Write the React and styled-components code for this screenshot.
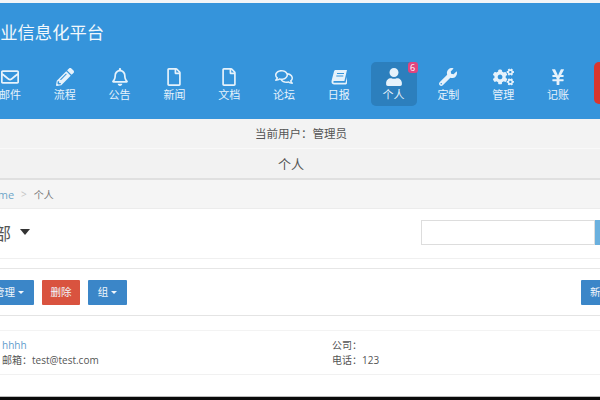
import React from "react";
import styled, { createGlobalStyle } from "styled-components";
import {
  FaRegEnvelope,
  FaPencilAlt,
  FaRegBell,
  FaRegFile,
  FaRegComments,
  FaUser,
  FaWrench,
  FaCogs,
  FaYenSign,
} from "react-icons/fa";

const GlobalStyle = createGlobalStyle`
  html, body {
    margin: 0;
    padding: 0;
    background: #fff;
    overflow: hidden;
  }
  * {
    box-sizing: border-box;
  }
`;

const Page = styled.div`
  width: 600px;
  height: 400px;
  overflow: hidden;
  display: flex;
  flex-direction: column;
  background: #fff;
  color: #555;
  font-family: "Open Sans", "Noto Sans CJK SC", sans-serif;
  font-size: 11px;
`;

const TopStrip = styled.div`
  height: 3px;
  background: #f2f5f7;
`;

const Header = styled.header`
  height: 116px;
  background: #3594db;
  color: #fff;
  overflow: hidden;
`;

const Brand = styled.h1`
  margin: 20px 0 0 -17px;
  height: 20px;
  font-size: 17.3px;
  line-height: 20px;
  font-weight: 400;
  color: #f2f8fc;
  white-space: nowrap;
`;

const Nav = styled.nav`
  display: flex;
  gap: 8.8px;
  margin: 19px 0 0 -13px;
  width: 700px;
`;

const NavItem = styled.a`
  position: relative;
  flex: 0 0 46px;
  height: 44px;
  display: flex;
  flex-direction: column;
  align-items: center;
  padding-top: 6px;
  border-radius: 5px;
  background: ${({ $active }) => ($active ? "#2c7fbd" : "transparent")};
  color: #e6f2fb;
  font-size: 11px;
  line-height: 14px;

  svg {
    height: 18px;
    width: ${({ $wide }) => ($wide ? "21px" : "18px")};
    margin-bottom: 2px;
  }
`;

const Badge = styled.span`
  position: absolute;
  top: 0;
  right: -1px;
  width: 10px;
  height: 11px;
  border-radius: 3px;
  background: #e0457f;
  color: #fff;
  font-size: 9px;
  line-height: 11px;
  text-align: center;
`;

const LogoutItem = styled.a`
  flex: 0 0 46px;
  height: 42px;
  margin-left: 4px;
  border-radius: 5px;
  background: #d9362e;
`;

const UserBar = styled.div`
  height: 30px;
  background: #f3f3f3;
  border-bottom: 1px solid #f9f9f9;
  display: flex;
  align-items: center;
  justify-content: center;
  padding: 0 0 2px 2px;
  font-size: 11.5px;
  color: #555;
`;

const TitleBar = styled.div`
  height: 31px;
  background: #f2f2f2;
  border-bottom: 2px solid #e0e0e0;
  display: flex;
  align-items: center;
  justify-content: center;
  padding-right: 18px;
  font-size: 13px;
  color: #555;
`;

const Breadcrumb = styled.div`
  height: 29px;
  background: #f5f5f5;
  border-bottom: 1px solid #ececec;
  display: flex;
  align-items: center;
  margin-left: -17px;
  width: 620px;
  gap: 7px;
  font-size: 10px;
  color: #777;
`;

const Crumb = styled.a`
  color: #6fa6c9;
  font-size: 11px;
`;

const Sep = styled.span`
  color: #c4c4c4;
`;

const TitleRow = styled.div`
  height: 50px;
  padding-bottom: 3px;
  border-bottom: 1px solid #f0f0f0;
  display: flex;
  align-items: center;
  justify-content: space-between;
`;

const Dept = styled.div`
  display: flex;
  align-items: center;
  gap: 9px;
  margin-left: -23px;
  font-size: 17px;
  color: #555;
`;

const Caret = styled.span`
  width: 0;
  height: 0;
  border-left: 5.5px solid transparent;
  border-right: 5.5px solid transparent;
  border-top: 6px solid #333;
`;

const Search = styled.div`
  display: flex;
  margin-right: -10px;
`;

const SearchInput = styled.input`
  width: 174px;
  height: 25px;
  border: 1px solid #ddd;
  background: #fff;
  outline: none;
`;

const SearchButton = styled.button`
  width: 15px;
  height: 25px;
  border: 0;
  background: #6ab0de;
`;

const Spacer = styled.div`
  height: 10px;
  border-bottom: 1px solid #e6e6e6;
`;

const Toolbar = styled.div`
  height: 47px;
  border-bottom: 1px solid #e4e4e4;
  padding-top: 11px;
  display: flex;
  align-items: flex-start;
  justify-content: space-between;
`;

const ButtonGroup = styled.div`
  display: flex;
  gap: 8px;
  margin-left: -16px;
`;

const Button = styled.button`
  height: 25px;
  width: ${({ $width }) => $width}px;
  padding: 0;
  border: 0;
  border-radius: 1px;
  background: ${({ $danger }) => ($danger ? "#d9533f" : "#3b86c8")};
  color: #f1f6fb;
  font-family: inherit;
  font-size: 10.5px;
  line-height: 25px;
  white-space: nowrap;
`;

const ButtonCaret = styled.span`
  display: inline-block;
  width: 0;
  height: 0;
  margin-left: 3px;
  vertical-align: 2px;
  border-left: 3px solid transparent;
  border-right: 3px solid transparent;
  border-top: 3px solid #f1f6fb;
`;

const NewButton = styled(Button)`
  margin-right: -20px;
  text-align: left;
  padding-left: 9px;
`;

const Gap = styled.div`
  height: 15px;
  border-bottom: 1px solid #f3f3f3;
`;

const Member = styled.div`
  height: 44px;
  border-bottom: 1px solid #f1f1f1;
  padding: 7px 0 0 2px;
  display: grid;
  grid-template-columns: 330px 1fr;
  grid-auto-rows: 15px;
  font-size: 10px;
  line-height: 15px;
  color: #555;
`;

const MemberName = styled.a`
  color: #5f9ccc;
`;

const Field = styled.div`
  white-space: pre;
`;

const Rest = styled.div`
  flex: 1;
`;

const BottomEdge = styled.div`
  height: 4px;
  border-top: 1px solid #bbb;
  background: #0a0a0a;
`;

// slanted book, closer to the reference than the upright package icon
const BookIcon = () => (
  <svg viewBox="0 0 18 18">
    <path
      fill="currentColor"
      d="M5.5 2H17l-2.6 11H4.3c-1.2 0-1.6 1.8-.1 1.8H15.5L17 9v6.5l-1 .9H4C1.9 16.4 1 14.5 1.7 12.2L4 3.5C4.2 2.6 4.7 2 5.5 2Z"
    />
    <path stroke="#3594db" strokeWidth="1" d="M7 5.5h7M6.3 8h7" />
  </svg>
);

const navItems = [
  { label: "邮件", Icon: FaRegEnvelope },
  { label: "流程", Icon: FaPencilAlt },
  { label: "公告", Icon: FaRegBell },
  { label: "新闻", Icon: FaRegFile },
  { label: "文档", Icon: FaRegFile },
  { label: "论坛", Icon: FaRegComments },
  { label: "日报", Icon: BookIcon },
  { label: "个人", Icon: FaUser, active: true, badge: 6 },
  { label: "定制", Icon: FaWrench },
  { label: "管理", Icon: FaCogs, wide: true },
  { label: "记账", Icon: FaYenSign },
];

export default function App() {
  return (
    <Page>
      <GlobalStyle />
      <TopStrip />
      <Header>
        <Brand>企业信息化平台</Brand>
        <Nav>
          {navItems.map(({ label, Icon, active, badge, wide }) => (
            <NavItem key={label} $active={active} $wide={wide}>
              <Icon />
              {label}
              {badge && <Badge>{badge}</Badge>}
            </NavItem>
          ))}
          <LogoutItem />
        </Nav>
      </Header>
      <UserBar>当前用户：管理员</UserBar>
      <TitleBar>个人</TitleBar>
      <Breadcrumb>
        <Crumb>Home</Crumb>
        <Sep>&gt;</Sep>
        <span>个人</span>
      </Breadcrumb>
      <TitleRow>
        <Dept>
          全部
          <Caret />
        </Dept>
        <Search>
          <SearchInput />
          <SearchButton />
        </Search>
      </TitleRow>
      <Spacer />
      <Toolbar>
        <ButtonGroup>
          <Button $width={50}>
            管理
            <ButtonCaret />
          </Button>
          <Button $width={38} $danger>
            删除
          </Button>
          <Button $width={39}>
            组
            <ButtonCaret />
          </Button>
        </ButtonGroup>
        <NewButton $width={39}>新建</NewButton>
      </Toolbar>
      <Gap />
      <Member>
        <MemberName>hhhh</MemberName>
        <Field>公司：</Field>
        <Field>邮箱：test@test.com</Field>
        <Field>电话：123</Field>
      </Member>
      <Rest />
      <BottomEdge />
    </Page>
  );
}
